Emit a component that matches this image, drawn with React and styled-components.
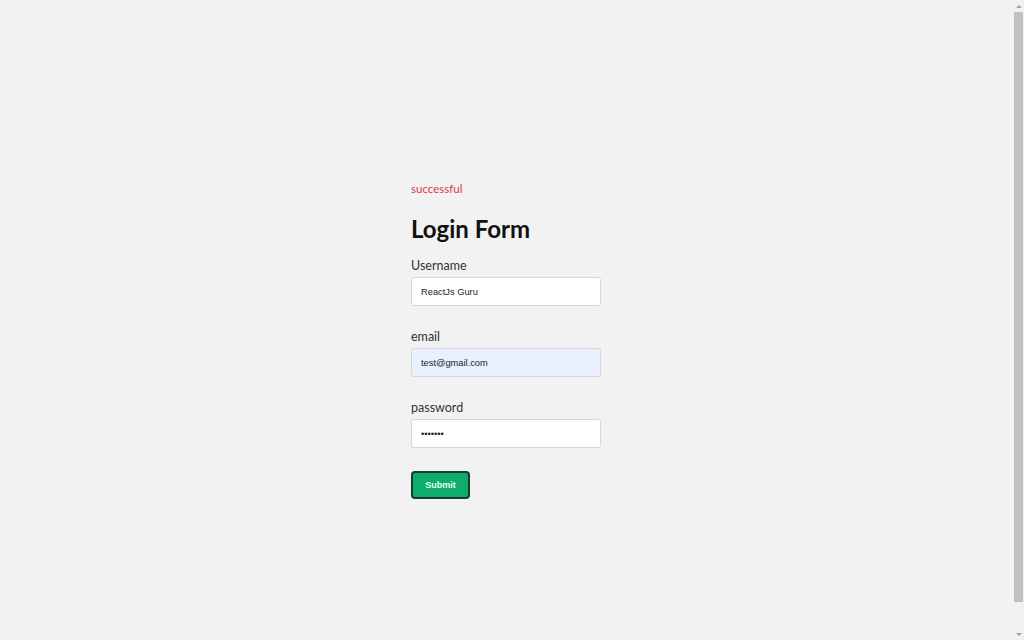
import { useState } from "react";
import styled, { createGlobalStyle } from "styled-components";

const GlobalStyle = createGlobalStyle`
    body {
        margin: 0;
        background: #f2f2f2;
        font-family: Lato, "Noto Sans", sans-serif;
        color: #222;
    }
`;

const Page = styled.div`
    min-height: 640px;
    display: flex;
    justify-content: center;
    padding: 180px 12px 0 0;
    box-sizing: border-box;
`;

// window scrollbar as it appears in the screenshot
const Scrollbar = styled.div`
    position: fixed;
    top: 0;
    right: 0;
    bottom: 0;
    width: 11px;
    background: #f1f1f1;
    display: flex;
    flex-direction: column;
    align-items: center;
`;

const Arrow = styled.div`
    height: 12px;
    display: flex;
    align-items: center;
    justify-content: center;
    &::after {
        content: "";
        border-left: 3px solid transparent;
        border-right: 3px solid transparent;
        ${(p) => (p.$down ? "border-top: 3px solid #a3a3a3;" : "border-bottom: 3px solid #a3a3a3;")}
    }
`;

const Thumb = styled.div`
    width: 9px;
    height: 590px;
    background: #c1c1c1;
`;

const Track = styled.div`
    flex: 1;
`;

const Form = styled.form`
    width: 190px;
    display: flex;
    flex-direction: column;
`;

const Status = styled.p`
    margin: 0;
    color: #e0383a;
    font-size: 11.5px;
    line-height: 18px;
`;

const Title = styled.h1`
    margin: 16px 0 13px;
    font-size: 24px;
    font-weight: 700;
    color: #111;
    line-height: 30px;
`;

const Field = styled.div`
    display: flex;
    flex-direction: column;
    margin-bottom: 22px;
`;

const Label = styled.label`
    font-size: 12.5px;
    line-height: 18px;
    color: #333;
    margin-bottom: 2px;
`;

const Input = styled.input`
    height: 29px;
    box-sizing: border-box;
    padding: 0 9px;
    border: 1px solid #d6d6d6;
    border-radius: 3px;
    background: ${(p) => (p.$filled ? "#e8f0fe" : "#fff")};
    font-family: "Liberation Sans", Arial, sans-serif;
    font-size: 9.3px;
    color: #222;
    outline: none;
`;

const Button = styled.button`
    width: 59px;
    height: 28px;
    margin-top: 1px;
    background: #0ead6e;
    border: 2px solid #1c3a2e;
    border-radius: 4px;
    color: #e8fff3;
    font-family: "Liberation Sans", Arial, sans-serif;
    font-size: 9px;
    font-weight: 700;
    cursor: pointer;
`;

const App = () => {
    const [user, setUser] = useState("ReactJs Guru");
    const [email, setEmail] = useState("test@gmail.com");
    const [pass, setPass] = useState("1234567");

    return (
        <>
            <GlobalStyle />
            <Page>
                <Form onSubmit={(e) => e.preventDefault()}>
                    <Status>successful</Status>
                    <Title>Login Form</Title>
                    <Field>
                        <Label>Username</Label>
                        <Input value={user} onChange={(e) => setUser(e.target.value)} />
                    </Field>
                    <Field>
                        <Label>email</Label>
                        <Input $filled value={email} onChange={(e) => setEmail(e.target.value)} />
                    </Field>
                    <Field>
                        <Label>password</Label>
                        <Input type="password" value={pass} onChange={(e) => setPass(e.target.value)} />
                    </Field>
                    <div>
                        <Button type="submit">Submit</Button>
                    </div>
                </Form>
            </Page>
            <Scrollbar>
                <Arrow />
                <Thumb />
                <Track />
                <Arrow $down />
            </Scrollbar>
        </>
    );
};

export default App;
